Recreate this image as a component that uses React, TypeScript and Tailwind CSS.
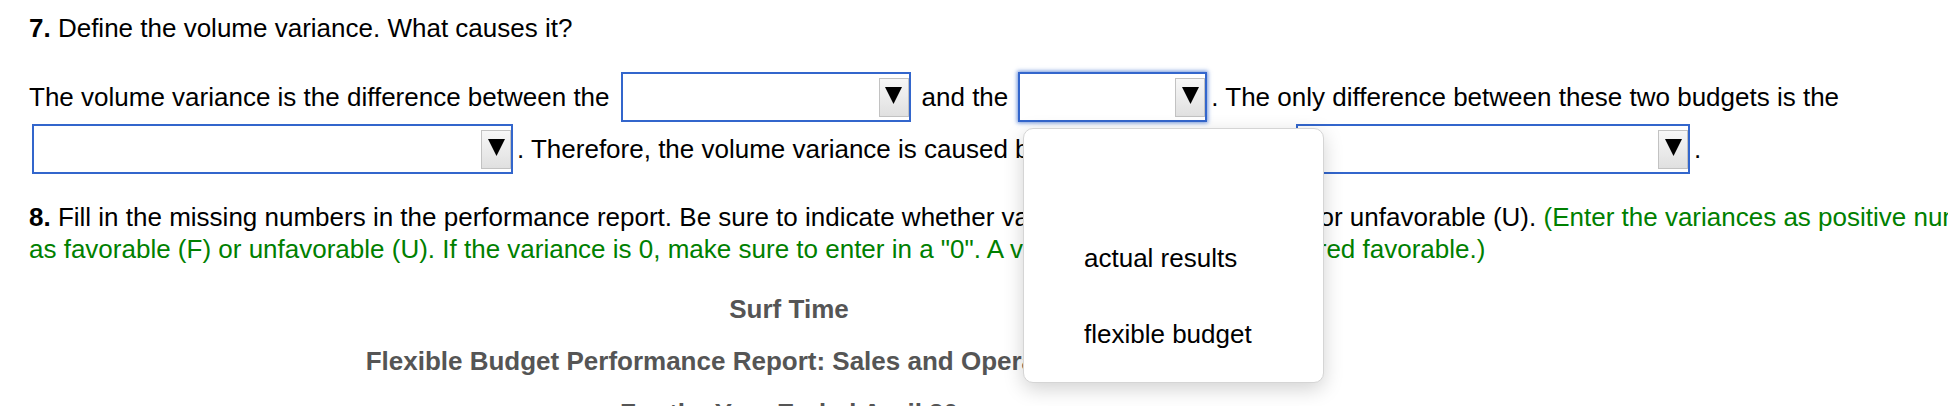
const Arrow = () => (
  <span className="flex h-[39px] w-[30px] items-center justify-center border border-[#c2c2c2] bg-gradient-to-b from-[#f7f7f7] to-[#e0e0e0]">
    <svg width="17" height="17" viewBox="0 0 17 17" className="-mt-[3px]">
      <polygon points="0,0 17,0 8.5,17" fill="#000" />
    </svg>
  </span>
);

const Select = ({ className = '', focused = false }: { className?: string; focused?: boolean }) => (
  <span
    className={`flex h-[50px] shrink-0 items-center justify-end border-2 border-[#3366cc] bg-white ${
      focused ? 'shadow-[0_0_4px_1px_rgba(51,102,204,0.7)]' : ''
    } ${className}`}
  >
    <Arrow />
  </span>
);

const App = () => {
  return (
    <div className="relative h-[406px] w-full overflow-hidden bg-white">
      <div className="w-[2300px] pl-[29px] pt-[13px] font-['Liberation_Sans',Arial,sans-serif] text-[26px] leading-[30px] text-black">
        <p>
          <b>7.</b> Define the volume variance. What causes it?
        </p>

        <div className="mt-[29px] flex h-[50px] items-center whitespace-nowrap">
          <span>The volume variance is the difference between the</span>
          <Select className="ml-[11px] w-[290px]" />
          <span className="ml-[11px]">and the</span>
          <Select className="ml-[10px] w-[189px]" focused />
          <span className="ml-[4px]">. The only difference between these two budgets is the</span>
        </div>

        <div className="mt-[2px] flex h-[50px] items-center whitespace-nowrap">
          <Select className="ml-[3px] w-[481px]" />
          <span className="ml-[4px] w-[776px] shrink-0 overflow-hidden">
            . Therefore, the volume variance is caused by the actual volume of
          </span>
          <Select className="ml-[3px] w-[394px]" />
          <span className="ml-[4px]">.</span>
        </div>

        <p className="mt-[27px] w-[2246px] leading-[32px]">
          <b>8.</b> Fill in the missing numbers in the performance report. Be sure to indicate whether
          variances are favorable (F) or unfavorable (U).{' '}
          <span className="text-[#008000]">
            (Enter the variances as positive numbers. Label each variance as favorable (F) or
            unfavorable (U). If the variance is 0, make sure to enter in a &quot;0&quot;. A variance of
            zero is considered favorable.)
          </span>
        </p>

        <div className="mt-[18px] w-[1520px] text-center font-bold leading-[52px] text-[#555]">
          <p>Surf Time</p>
          <p>Flexible Budget Performance Report: Sales and Operating Expenses</p>
          <p>For the Year Ended April 30</p>
        </div>
      </div>

      {/* open dropdown list of the second select */}
      <div className="absolute left-[1023px] top-[128px] h-[255px] w-[301px] rounded-[10px] border border-[#d5d5d5] bg-white pl-[60px] pt-[15px] font-['Liberation_Sans',Arial,sans-serif] text-[26px] text-black shadow-[0_6px_20px_rgba(0,0,0,0.18)]">
        <div className="h-[76px]" />
        <div className="flex h-[76px] items-center">actual results</div>
        <div className="flex h-[76px] items-center">flexible budget</div>
      </div>
    </div>
  );
};

export default App;
